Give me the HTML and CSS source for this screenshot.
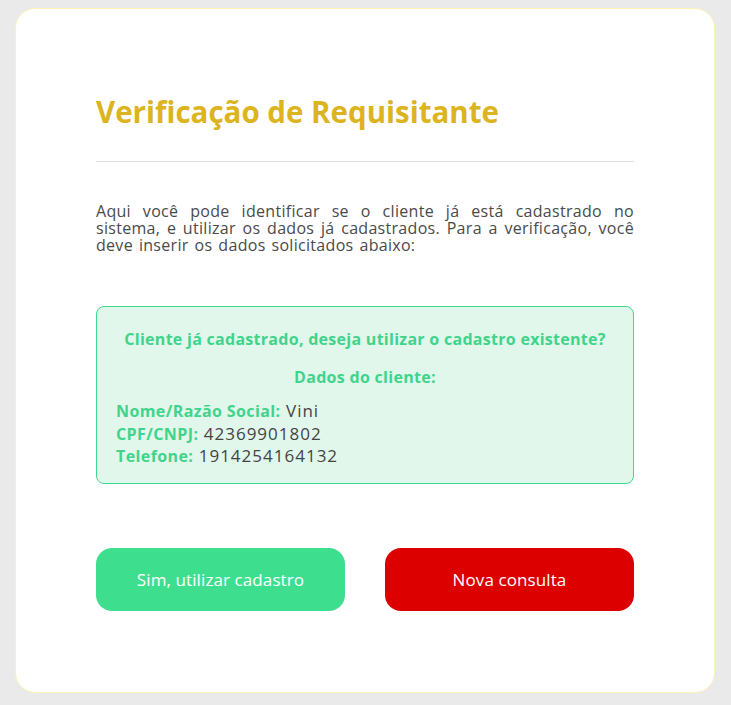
FILE: index.html
```html
<!DOCTYPE html>
<html lang="pt-BR">
<head>
<meta charset="utf-8">
<title>Verificação de Requisitante</title>
<link rel="stylesheet" href="styles.css">
</head>
<body>
<main class="card">
  <h1 class="title">Verificação de Requisitante</h1>
  <hr class="divider">
  <p class="intro">Aqui você pode identificar se o cliente já está cadastrado no sistema, e utilizar os dados já cadastrados. Para a verificação, você deve inserir os dados solicitados abaixo:</p>
  <section class="found">
    <p class="found-q">Cliente já cadastrado, deseja utilizar o cadastro existente?</p>
    <p class="found-h">Dados do cliente:</p>
    <div class="rows">
      <div><span class="lbl">Nome/Razão Social:</span> Vini</div>
      <div><span class="lbl">CPF/CNPJ:</span> 42369901802</div>
      <div><span class="lbl">Telefone:</span> 1914254164132</div>
    </div>
  </section>
  <div class="actions">
    <button class="btn btn-yes">Sim, utilizar cadastro</button>
    <button class="btn btn-new">Nova consulta</button>
  </div>
</main>
</body>
</html>
```
FILE: styles.css
```css
html, body {
  margin: 0;
  padding: 0;
  background: #eaeaea;
}
body {
  padding: 8px 16px 12px 15px;
  font-family: "Open Sans", "Lato", sans-serif;
  color: #4a4a4a;
}
.card {
  background: #fff;
  border: 1px solid #fdf0b8;
  border-radius: 20px;
  padding: 79px 80px 80px 80px;
  box-sizing: border-box;
  width: 700px;
  height: 685px;
}
.title {
  margin: 0;
  font-size: 29.5px;
  line-height: 48px;
  font-weight: 700;
  color: #dcb420;
}
.divider {
  border: 0;
  border-top: 1px solid #dde1e3;
  margin: 25px 0 0 0;
}
.intro {
  margin: 41px 0 0 0;
  font-size: 16px;
  letter-spacing: 0.3px;
  word-spacing: 1.5px;
  line-height: 17px;
  text-align: justify;
  color: #4a4a4a;
}
.found {
  margin-top: 52px;
  background: #e2f7eb;
  border: 1px solid #3fd98c;
  border-radius: 8px;
  padding: 20px 19px 15px 19px;
  color: #3fd48c;
}
.found-q {
  margin: 0;
  text-align: center;
  font-weight: 700;
  font-size: 16px;
  letter-spacing: 0.28px;
  line-height: 24px;
}
.found-h {
  margin: 14px 0 0 0;
  text-align: center;
  font-weight: 700;
  font-size: 16px;
  letter-spacing: 0.3px;
  line-height: 24px;
}
.rows {
  margin-top: 11px;
  font-size: 17px;
  letter-spacing: 1px;
  line-height: 22.5px;
  color: #444;
}
.lbl {
  color: #3fd48c;
  font-weight: 700;
  font-size: 16px;
  letter-spacing: 0.4px;
}
.actions {
  margin-top: 64px;
  display: flex;
  gap: 40px;
}
.btn {
  flex: 1;
  height: 63px;
  border: 0;
  border-radius: 16px;
  color: #fff;
  font-family: inherit;
  font-size: 17px;
  letter-spacing: 0.1px;
}
.btn-yes { background: #3ddf8f; }
.btn-new { background: #dc0000; }
```
